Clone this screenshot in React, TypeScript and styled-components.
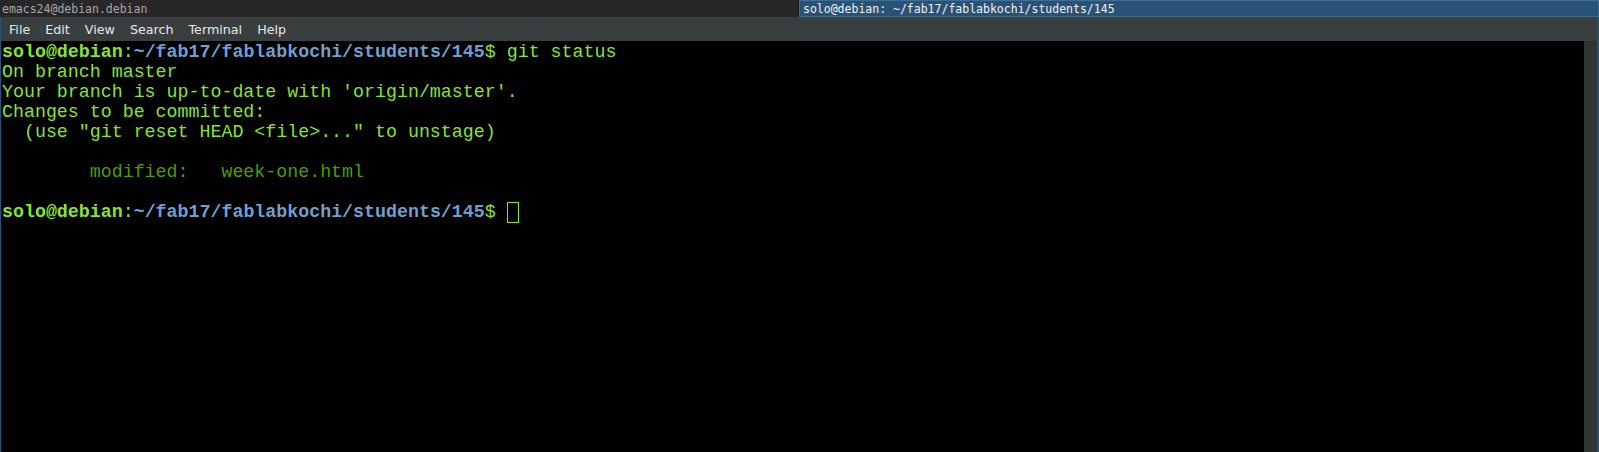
import React from "react";
import styled, { createGlobalStyle } from "styled-components";

const Global = createGlobalStyle`
  html, body { margin: 0; padding: 0; background: #000; }
  body { width: 1599px; height: 452px; overflow: hidden; }
  #root { height: 452px; }
`;

const Screen = styled.div`
  display: flex;
  flex-direction: column;
  width: 1599px;
  height: 452px;
`;

const TopBar = styled.div`
  display: flex;
  height: 17px;
  background: #262626;
  flex-shrink: 0;
`;

const Title = styled.div<{ $active?: boolean }>`
  display: flex;
  align-items: center;
  box-sizing: border-box;
  height: 17px;
  padding-left: ${(p) => (p.$active ? "3px" : "2px")};
  font-family: "DejaVu Sans Mono", monospace;
  font-size: 11.5px;
  white-space: nowrap;
  color: ${(p) => (p.$active ? "#f2f2f2" : "#a8a8a8")};
  background: ${(p) => (p.$active ? "#285377" : "#272727")};
  border: ${(p) => (p.$active ? "1px solid #3f6d95" : "none")};
  ${(p) => (p.$active ? "flex: 1;" : "width: 799px; border-right: 1px solid #1a1a1a;")}
`;

const Window = styled.div`
  flex: 1;
  display: flex;
  flex-direction: column;
  border-left: 1px solid #285377;
  border-right: 2px solid #285377;
  min-height: 0;
`;

const MenuBar = styled.div`
  display: flex;
  align-items: center;
  height: 24px;
  background: #393f3f;
  flex-shrink: 0;
`;

const MenuItem = styled.span`
  font-family: "DejaVu Sans", "Noto Sans", sans-serif;
  font-size: 12.7px;
  color: #e8e8e7;
  padding: 0 7px 0 8px;
`;

const Body = styled.div`
  flex: 1;
  display: flex;
  min-height: 0;
`;

const Terminal = styled.div`
  flex: 1;
  background: #000;
  padding: 1px 0 0 1px;
  font-family: "Liberation Mono", monospace;
  font-size: 18.3px;
  line-height: 20px;
  color: #8ae234;
  white-space: pre;
`;

const Scrollbar = styled.div`
  width: 13px;
  background: #2f3535;
`;

const Line = styled.div`
  height: 20px;
  display: flex;
  align-items: center;
`;

const Span = styled.span<{ $c?: string; $bold?: boolean }>`
  color: ${(p) => p.$c || "#8ae234"};
  font-weight: ${(p) => (p.$bold ? 700 : 400)};
`;

const Cursor = styled.span`
  display: inline-block;
  box-sizing: border-box;
  width: 12px;
  height: 21px;
  border: 1px solid #8ae234;
  vertical-align: middle;
`;

const Prompt = () => (
  <>
    <Span $bold $c="#8ae234">solo@debian</Span>
    <Span>:</Span>
    <Span $bold $c="#729fcf">~/fab17/fablabkochi/students/145</Span>
    <Span>$ </Span>
  </>
);

export default function App() {
  return (
    <>
      <Global />
      <Screen>
        <TopBar>
          <Title>emacs24@debian.debian</Title>
          <Title $active>solo@debian: ~/fab17/fablabkochi/students/145</Title>
        </TopBar>
        <Window>
          <MenuBar>
            {["File", "Edit", "View", "Search", "Terminal", "Help"].map((m) => (
              <MenuItem key={m}>{m}</MenuItem>
            ))}
          </MenuBar>
          <Body>
            <Terminal>
              <Line>
                <Prompt />
                <Span>git status</Span>
              </Line>
              <Line>On branch master</Line>
              <Line>Your branch is up-to-date with 'origin/master'.</Line>
              <Line>Changes to be committed:</Line>
              <Line>{'  (use "git reset HEAD <file>..." to unstage)'}</Line>
              <Line> </Line>
              <Line>
                <Span $c="#4e9a06">{"        modified:   week-one.html"}</Span>
              </Line>
              <Line> </Line>
              <Line>
                <Prompt />
                <Cursor />
              </Line>
            </Terminal>
            <Scrollbar />
          </Body>
        </Window>
      </Screen>
    </>
  );
}
